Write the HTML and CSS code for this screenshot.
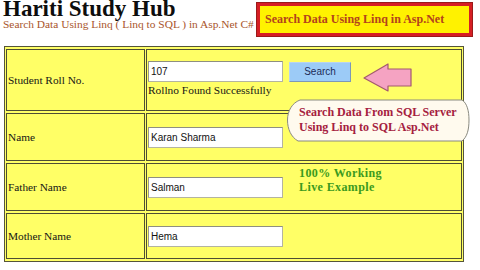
FILE: index.html
```html
<!DOCTYPE html>
<html>
<head>
<meta charset="utf-8">
<link rel="stylesheet" href="styles.css">
</head>
<body>
<div class="page">
  <header class="header">
    <div class="brand">
      <h1 class="title">Hariti Study Hub</h1>
      <p class="subtitle">Search Data Using Linq ( Linq to SQL ) in Asp.Net C#</p>
    </div>
    <div class="banner">Search Data Using Linq in Asp.Net</div>
  </header>

  <table class="form">
    <tr class="row-first">
      <td class="label">Student Roll No.</td>
      <td class="field field-top">
        <div class="search-line">
          <input class="textbox" type="text" value="107">
          <button class="btn">Search</button>
        </div>
        <div class="message">Rollno Found Successfully</div>
      </td>
    </tr>
    <tr class="row">
      <td class="label">Name</td>
      <td class="field"><input class="textbox" type="text" value="Karan Sharma"></td>
    </tr>
    <tr class="row">
      <td class="label">Father Name</td>
      <td class="field"><input class="textbox" type="text" value="Salman"></td>
    </tr>
    <tr class="row row-last">
      <td class="label">Mother Name</td>
      <td class="field"><input class="textbox" type="text" value="Hema"></td>
    </tr>
  </table>

  <svg class="arrow" width="50" height="31" viewBox="0 0 50 31">
    <polygon points="1,16 25,2 25,7 48,7 48,24 25,24 25,29" fill="#f5a3c2" stroke="#a35a6e" stroke-width="1.2" stroke-linejoin="round"/>
  </svg>

  <div class="bubble">
    <svg class="bubble-shape" width="184" height="46" viewBox="0 0 184 46">
      <path d="M14 3 L176 3 C181 6 183 14 183 23 C183 33 181 40 176 44 L12 44 C5 40 1.5 32 1.5 23 C1.5 14 6 6 14 3 Z" fill="#fffaee" stroke="#8a8a80" stroke-width="1"/>
    </svg>
    <div class="bubble-text">Search Data From SQL Server<br>Using Linq to SQL Asp.Net</div>
  </div>

  <div class="note">100% Working<br>Live Example</div>
</div>
</body>
</html>
```

FILE: styles.css
```css
html, body {
  margin: 0;
  padding: 0;
  background: #ffffff;
}

.page {
  position: relative;
  width: 480px;
  height: 270px;
  overflow: hidden;
  font-family: "Liberation Serif", "Times New Roman", serif;
  color: #111;
}

.header {
  display: flex;
  align-items: flex-start;
  height: 36px;
}

.brand {
  flex: 1;
  padding-left: 3px;
}

.title {
  margin: 0;
  font-size: 23px;
  line-height: 18px;
  font-weight: bold;
  color: #0d0d0d;
  white-space: nowrap;
}

.subtitle {
  margin: 0;
  font-size: 11.4px;
  line-height: 13px;
  color: #a9552c;
  white-space: nowrap;
}

.banner {
  box-sizing: border-box;
  width: 215px;
  height: 33px;
  margin: 3px 8px 0 0;
  border: 3px solid #d61e24;
  outline: 1px solid #9a1a1a;
  background: #fff200;
  color: #b3431c;
  font-weight: bold;
  font-size: 12px;
  display: flex;
  align-items: center;
  padding-left: 5px;
  white-space: nowrap;
}

.form {
  margin: 10px 0 0 4px;
  width: 460px;
  table-layout: fixed;
  border: 1px solid #55553a;
  border-spacing: 1px 2px;
  background: #ffff66;
}

.form td {
  box-sizing: border-box;
  border: 1px solid #4e4e34;
  background: #ffff66;
  vertical-align: middle;
  padding: 0 1px;
}

.row-first td {
  height: 62px;
}

.row td {
  height: 48px;
}

.row-last td {
  height: 46px;
}

.label {
  width: 139px;
  font-size: 11.3px;
  color: #151515;
  white-space: nowrap;
}

.field-top {
  vertical-align: top !important;
  padding-top: 11px !important;
}

.search-line {
  display: flex;
  align-items: center;
  gap: 6px;
}

.textbox {
  box-sizing: border-box;
  display: block;
  width: 135px;
  height: 21px;
  margin: 0;
  padding: 0 2px;
  border: 1px solid #b4b4a0;
  border-top-color: #8f8f80;
  border-left-color: #9a9a88;
  background: #ffffff;
  font-family: "Liberation Sans", Arial, sans-serif;
  font-size: 10px;
  color: #111;
  outline: none;
}

.btn {
  box-sizing: border-box;
  width: 62px;
  height: 20px;
  margin: 0;
  padding: 0;
  border: 1px solid #7d98b6;
  border-top-color: #b9d4ee;
  border-left-color: #b9d4ee;
  background: #9ccbf7;
  font-family: "Liberation Sans", Arial, sans-serif;
  font-size: 10px;
  color: #1c2c58;
}

.message {
  margin-top: 1px;
  font-size: 11.4px;
  line-height: 14px;
  color: #151515;
  white-space: nowrap;
}

.arrow {
  position: absolute;
  left: 363px;
  top: 62px;
}

.bubble {
  position: absolute;
  left: 286px;
  top: 97px;
  width: 184px;
  height: 46px;
}

.bubble-shape {
  position: absolute;
  left: 0;
  top: 0;
}

.bubble-text {
  position: relative;
  padding: 8px 0 0 13px;
  font-weight: bold;
  font-size: 12px;
  line-height: 14.5px;
  color: #a5203e;
  white-space: nowrap;
}

.note {
  position: absolute;
  left: 299px;
  top: 166px;
  font-weight: bold;
  font-size: 12px;
  line-height: 14px;
  letter-spacing: 0.4px;
  color: #3c9a1e;
  white-space: nowrap;
}
```
